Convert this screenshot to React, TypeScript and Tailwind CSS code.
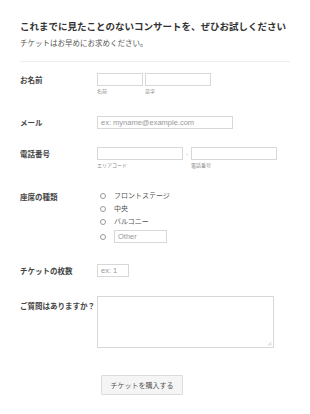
import React from 'react'

const font = { fontFamily: '"Noto Sans CJK JP", "Liberation Sans", sans-serif' }

function Label({ children, top = 'mt-[3px]' }: { children: React.ReactNode; top?: string }) {
  return (
    <div className={`w-[77px] shrink-0 text-[7.5px] font-bold text-[#444] leading-none ${top}`}>{children}</div>
  )
}

function Box({ w, h = 'h-[13px]', placeholder }: { w: string; h?: string; placeholder?: string }) {
  return (
    <div className={`${w} ${h} border border-[#d8d8d8] bg-white flex items-center px-[3px] font-['Liberation_Sans',sans-serif] text-[7.5px] text-[#999] leading-none`}>
      {placeholder}
    </div>
  )
}

function Radio({ children }: { children: React.ReactNode }) {
  return (
    <div className="flex items-center h-[13px]">
      <div className="w-[6px] h-[6px] rounded-full border border-[#999] ml-[3px] mr-[8px]" />
      {children}
    </div>
  )
}

export default function App() {
  return (
    <div className="w-[310px] h-[414px] bg-white px-5 pt-[22px] text-[#333]" style={font}>
      {/* header */}
      <h1 className="text-[9.5px] font-bold leading-none whitespace-nowrap text-[#333]">
        これまでに見たことのないコンサートを、ぜひお試しください
      </h1>
      <p className="mt-[7px] text-[7.5px] leading-none text-[#555]">チケットはお早めにお求めください。</p>
      <div className="mt-[15px] h-px bg-[#eeeeee]" />

      {/* name */}
      <div className="flex mt-[11px]">
        <Label>お名前</Label>
        <div className="flex gap-[2px]">
          <div>
            <Box w="w-[46px]" />
            <div className="mt-[2px] text-[5px] text-[#888] leading-none">名前</div>
          </div>
          <div>
            <Box w="w-[66px]" />
            <div className="mt-[2px] text-[5px] text-[#888] leading-none">苗字</div>
          </div>
        </div>
      </div>

      {/* email */}
      <div className="flex mt-[23px]">
        <Label>メール</Label>
        <Box w="w-[136px]" placeholder="ex: myname@example.com" />
      </div>

      {/* phone */}
      <div className="flex mt-[18px]">
        <Label>電話番号</Label>
        <div className="flex">
          <div>
            <Box w="w-[86px]" />
            <div className="mt-[2px] text-[5px] text-[#888] leading-none">エリアコード</div>
          </div>
          <div className="w-[8px] h-[13px] flex items-center justify-center text-[6px] text-[#999]">-</div>
          <div>
            <Box w="w-[86px]" />
            <div className="mt-[2px] text-[5px] text-[#888] leading-none">電話番号</div>
          </div>
        </div>
      </div>

      {/* seat */}
      <div className="flex mt-[22px]">
        <Label top="mt-[4px]">座席の種類</Label>
        <div className="flex flex-col text-[7px] text-[#555] leading-none">
          <Radio>フロントステージ</Radio>
          <Radio>中央</Radio>
          <Radio>バルコニー</Radio>
          <div className="flex items-center mt-[2px]">
            <div className="w-[6px] h-[6px] rounded-full border border-[#999] ml-[3px] mr-[8px]" />
            <Box w="w-[53px]" placeholder="Other" />
          </div>
        </div>
      </div>

      {/* ticket count */}
      <div className="flex mt-[21px]">
        <Label>チケットの枚数</Label>
        <Box w="w-[32px]" placeholder="ex: 1" />
      </div>

      {/* question */}
      <div className="flex mt-[19px]">
        <Label top="mt-[6px]">ご質問はありますか？</Label>
        <div className="relative w-[177px] h-[52px] border border-[#d8d8d8] bg-white">
          <svg className="absolute right-[1px] bottom-[1px]" width="5" height="5" viewBox="0 0 5 5">
            <path d="M4.5 1 L1 4.5 M4.5 3 L3 4.5" stroke="#aaa" strokeWidth="0.6" />
          </svg>
        </div>
      </div>

      {/* submit */}
      <div className="flex mt-[27px] pl-[81px]">
        <div className="w-[82px] h-[20px] border border-[#dcdcdc] bg-[#f5f5f5] rounded-[1px] flex items-center justify-center text-[7px] text-[#555] leading-none">
          チケットを購入する
        </div>
      </div>
    </div>
  )
}
